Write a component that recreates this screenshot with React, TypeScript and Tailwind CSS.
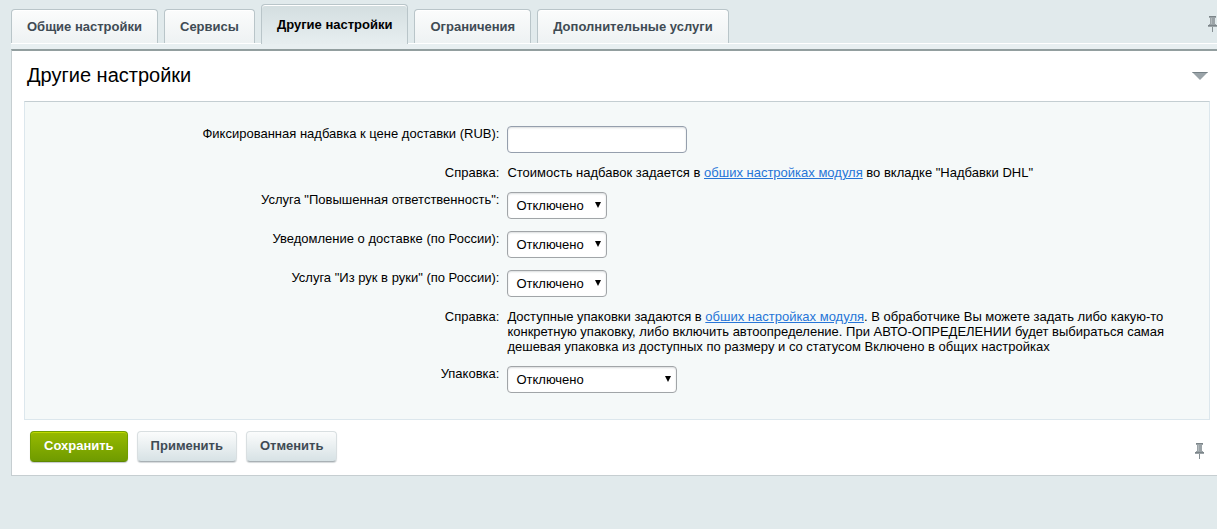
import React, { useState } from 'react';
import clsx from 'clsx';

const TABS = ['Общие настройки', 'Сервисы', 'Другие настройки', 'Ограничения', 'Дополнительные услуги'];

const PinIcon: React.FC = () => (
  <svg width="9" height="16" viewBox="0 0 9 16" aria-hidden="true">
    <path d="M1 0h7v2H7v6h1v1h1v2H0V9h1V8h1V2H1z" fill="#9ba3a7" />
    <path d="M1 0h7v1H1zM0 9h9v1H0z" fill="#7c8589" />
    <path d="M3 2h1v6H3z" fill="#b3babd" />
    <path d="M4 11h1v5H4z" fill="#858e92" />
  </svg>
);

interface RowProps {
  label: string;
  htmlFor?: string;
  children: React.ReactNode;
}

const Row: React.FC<RowProps> = ({ label, htmlFor, children }) => (
  <div className="flex gap-2">
    <div className="w-2/5 shrink-0 text-right">
      {htmlFor ? <label htmlFor={htmlFor}>{label}</label> : label}
    </div>
    <div className="min-w-0 flex-1">{children}</div>
  </div>
);

interface SelectProps {
  id: string;
  wide?: boolean;
}

const Select: React.FC<SelectProps> = ({ id, wide }) => (
  <div className={clsx('relative', wide ? 'w-[170px]' : 'w-[100px]')}>
    <select
      id={id}
      className="block h-[27px] w-full appearance-none rounded border border-[#a1a5a8] bg-white pr-5 pl-2 text-[13px] shadow-[inset_0_1px_2px_#d9dcde]"
    >
      <option>Отключено</option>
      <option>Включено</option>
    </select>
    <svg
      className="pointer-events-none absolute top-[10px] right-[6px]"
      width="7"
      height="6"
      viewBox="0 0 7 6"
      aria-hidden="true"
    >
      <path d="M1 0h6L4 6z" fill="#000" />
    </svg>
  </div>
);

const ModuleLink: React.FC = () => (
  <a href="#module" className="text-[#2675d7] underline">
    обших настройках модуля
  </a>
);

const grayButton =
  'h-[31px] rounded border border-[#d9dfe1] border-b-[#a9b1b5] bg-linear-to-b from-[#fbfcfc] to-[#d7e2e5] px-[13px] pb-[2px] text-[13px] font-bold text-[#3f4b54] shadow-[0_1px_1px_#d5d9db]';

const App: React.FC = () => {
  const [active, setActive] = useState(2);

  return (
    <div className="min-h-screen overflow-x-hidden bg-[#e1eaec] pt-1 pl-[11px] font-['Liberation_Sans',Arial,sans-serif] text-[13px] leading-[15px] text-black">
      {/* вкладки */}
      <div className="flex items-end gap-[6px]" role="tablist">
        {TABS.map((tab, i) => (
          <button
            key={tab}
            type="button"
            role="tab"
            aria-selected={i === active}
            onClick={() => setActive(i)}
            className={clsx(
              'relative rounded-t border border-b-0 border-[#b9c5c9] px-[15px] font-bold whitespace-nowrap shadow-[inset_0_1px_0_#fff]',
              i === active
                ? '-mb-px h-10 bg-linear-to-b from-[#d3dee0] to-[#e7eef0] text-black'
                : 'h-[34px] bg-linear-to-b from-[#fbfcfc] to-[#eef2f3] text-[#3f4b54]'
            )}
          >
            {tab}
          </button>
        ))}
        <button type="button" aria-label="Закрепить вкладки" className="mb-[11px] ml-auto">
          <PinIcon />
        </button>
      </div>
      <div className="h-[6px] border-t border-white bg-[#e8eff1]" />

      <div className="border-t-2 border-b border-l border-t-[#929e9f] border-b-[#c6ced1] border-l-[#c6ced1] bg-white pr-[7px] pl-3">
        <div className="flex h-[50px] items-center justify-between pr-[2px] pl-[3px]">
          <h1 className="pb-[2px] text-xl">Другие настройки</h1>
          <button type="button" aria-label="Свернуть">
            <svg width="16" height="8" viewBox="0 0 16 8" aria-hidden="true">
              <path d="M0 0h16L8 8z" fill="#9aa3a8" />
              <path d="M0 0h16l-1 1H1z" fill="#758085" />
            </svg>
          </button>
        </div>

        {/* форма */}
        <div className="flex flex-col gap-3 border border-[#dce7ed] border-t-[#c4ced2] bg-[#f5f9f9] px-1 pt-6 pb-[26px]">
          <Row label="Фиксированная надбавка к цене доставки (RUB):" htmlFor="markup">
            <input
              id="markup"
              type="text"
              className="block h-[27px] w-[180px] rounded border border-[#959fad] bg-white px-2 shadow-[inset_0_1px_2px_#d9dcde]"
            />
          </Row>
          <Row label="Справка:">
            Стоимость надбавок задается в <ModuleLink /> во вкладке "Надбавки DHL"
          </Row>
          <Row label={'Услуга "Повышенная ответственность":'} htmlFor="liability">
            <Select id="liability" />
          </Row>
          <Row label="Уведомление о доставке (по России):" htmlFor="notify">
            <Select id="notify" />
          </Row>
          <Row label={'Услуга "Из рук в руки" (по России):'} htmlFor="hands">
            <Select id="hands" />
          </Row>
          <Row label="Справка:">
            Доступные упаковки задаются в <ModuleLink />. В обработчике Вы можете задать либо какую-то конкретную
            упаковку, либо включить автоопределение. При АВТО-ОПРЕДЕЛЕНИИ будет выбираться самая дешевая упаковка из
            доступных по размеру и со статусом Включено в общих настройках
          </Row>
          <Row label="Упаковка:" htmlFor="package">
            <Select id="package" wide />
          </Row>
        </div>

        {/* кнопки */}
        <div className="flex items-center justify-between pt-[11px] pr-[6px] pb-[13px] pl-[6px]">
          <div className="flex gap-[9px]">
            <button
              type="button"
              className="h-[31px] rounded border border-[#729e00] border-b-[#5f8800] bg-linear-to-b from-[#97ba00] to-[#6f9b00] px-[13px] pb-[2px] text-[13px] font-bold text-white shadow-[inset_0_1px_0_#bfd800,0_1px_1px_#c5c9cb]"
            >
              Сохранить
            </button>
            <button type="button" className={grayButton}>
              Применить
            </button>
            <button type="button" className={grayButton}>
              Отменить
            </button>
          </div>
          <button type="button" aria-label="Закрепить панель" className="pt-2">
            <PinIcon />
          </button>
        </div>
      </div>
    </div>
  );
};

export default App;
